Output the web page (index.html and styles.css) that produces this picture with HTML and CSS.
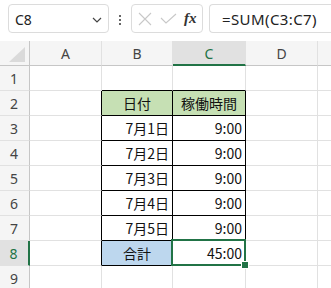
FILE: index.html
```html
<!DOCTYPE html>
<html lang="ja">
<head>
<meta charset="utf-8">
<link rel="stylesheet" href="styles.css">
</head>
<body>
<div class="toolbar">
  <div class="namebox">
    <span class="ref">C8</span>
    <svg class="chev" width="10" height="6" viewBox="0 0 10 6"><path d="M1 1 L5 5 L9 1" fill="none" stroke="#444" stroke-width="1.2"/></svg>
  </div>
  <div class="dots"><span></span><span></span><span></span></div>
  <div class="fnbox">
    <svg width="14" height="14" viewBox="0 0 14 14"><path d="M1 1 L13 13 M13 1 L1 13" stroke="#c8c8c8" stroke-width="1.1" fill="none"/></svg>
    <svg width="17" height="12" viewBox="0 0 17 12"><path d="M1 5 L6 10 L16 1" stroke="#c8c8c8" stroke-width="1.1" fill="none"/></svg>
    <span class="fx">fx</span>
  </div>
  <div class="formula">=SUM(C3:C7)</div>
</div>
<div class="grid">
  <div class="corner"><span class="tri"></span></div>
  <div class="ch">A</div><div class="ch">B</div><div class="ch sel">C</div><div class="ch">D</div><div class="ch last"></div>

  <div class="rh">1</div><div class="c"></div><div class="c bb"></div><div class="c bb"></div><div class="c"></div><div class="c last"></div>

  <div class="rh">2</div><div class="c br"></div><div class="c bb br hd ctr">日付</div><div class="c bb br hd ctr">稼働時間</div><div class="c"></div><div class="c last"></div>

  <div class="rh">3</div><div class="c br"></div><div class="c bb br num">7月1日</div><div class="c bb br num">9:00</div><div class="c"></div><div class="c last"></div>

  <div class="rh">4</div><div class="c br"></div><div class="c bb br num">7月2日</div><div class="c bb br num">9:00</div><div class="c"></div><div class="c last"></div>

  <div class="rh">5</div><div class="c br"></div><div class="c bb br num">7月3日</div><div class="c bb br num">9:00</div><div class="c"></div><div class="c last"></div>

  <div class="rh">6</div><div class="c br"></div><div class="c bb br num">7月4日</div><div class="c bb br num">9:00</div><div class="c"></div><div class="c last"></div>

  <div class="rh">7</div><div class="c br"></div><div class="c bb br num">7月5日</div><div class="c bb br num">9:00</div><div class="c"></div><div class="c last"></div>

  <div class="rh rsel">8</div><div class="c br"></div><div class="c bb br tot ctr">合計</div><div class="c bb br num active">45:00<span class="handle"></span></div><div class="c"></div><div class="c last"></div>

  <div class="rh">9</div><div class="c"></div><div class="c"></div><div class="c"></div><div class="c"></div><div class="c last"></div>
</div>
</body>
</html>
```
FILE: styles.css
```css
html, body {
  margin: 0;
  padding: 0;
  background: #ffffff;
  overflow: hidden;
  width: 331px;
  height: 288px;
}

.toolbar {
  height: 41px;
  width: 331px;
  overflow: hidden;
  display: flex;
  align-items: flex-start;
  padding-top: 4px;
  box-sizing: border-box;
  font-family: "Noto Sans", "Liberation Sans", sans-serif;
  color: #222;
}

.namebox {
  flex: 0 0 101px;
  margin-left: 8px;
  height: 29px;
  box-sizing: border-box;
  border: 1px solid #dcdcdc;
  border-radius: 4px;
  display: flex;
  align-items: center;
  justify-content: space-between;
  padding: 0 6px 0 6px;
  font-size: 14px;
}

.ref { padding-top: 2px; }

.chev { margin-top: 2px; }

.dots {
  flex: 0 0 22px;
  display: flex;
  flex-direction: column;
  align-items: center;
  gap: 2px;
  padding-top: 11px;
}

.dots span {
  width: 2px;
  height: 2px;
  background: #333;
  border-radius: 1px;
}

.fnbox {
  flex: 0 0 72px;
  height: 29px;
  box-sizing: border-box;
  border: 1px solid #dcdcdc;
  border-radius: 4px;
  display: flex;
  align-items: center;
  gap: 8px;
  padding-left: 6px;
}

.fx {
  font-family: "Liberation Serif", serif;
  font-style: italic;
  font-weight: bold;
  font-size: 15px;
  color: #333;
  margin-left: -1px;
}

.formula {
  margin-left: 6px;
  flex: 0 0 160px;
  height: 29px;
  box-sizing: border-box;
  border: 1px solid #dcdcdc;
  border-right: none;
  border-radius: 4px 0 0 4px;
  padding-left: 12px;
  display: flex;
  align-items: center;
  font-size: 15px;
  color: #222;
  letter-spacing: 0.4px;
}

.grid {
  display: grid;
  grid-template-columns: 30px 72px 71px 73px 72px 20px;
  grid-auto-rows: 25px;
  font-family: "Noto Sans CJK JP", "Noto Sans", sans-serif;
}

.grid > div {
  box-sizing: border-box;
  border-right: 1px solid #e1e1e1;
  border-bottom: 1px solid #e1e1e1;
}

.corner {
  background: #f5f5f5;
  position: relative;
  border-bottom: 1px solid #c6c6c6 !important;
  border-right: 1px solid #c6c6c6 !important;
}

.tri {
  position: absolute;
  right: 4px;
  bottom: 3px;
  width: 0;
  height: 0;
  border-left: 16px solid transparent;
  border-bottom: 15px solid #dadada;
}

.ch {
  background: #f5f5f5;
  border-bottom: 1px solid #c6c6c6 !important;
  display: flex;
  align-items: center;
  justify-content: center;
  font-family: "Noto Sans", "Liberation Sans", sans-serif;
  font-size: 14px;
  color: #444;
  padding-top: 1px;
}

.ch.sel {
  background: #e1e1e1;
  color: #217346;
  border-bottom: 2px solid #217346 !important;
}

.rh {
  background: #f5f5f5;
  border-right: 1px solid #c6c6c6 !important;
  display: flex;
  align-items: center;
  justify-content: center;
  font-family: "Noto Sans", "Liberation Sans", sans-serif;
  font-size: 14px;
  color: #444;
  padding-right: 1px;
}

.rh.rsel {
  background: #e1e1e1;
  color: #217346;
  border-right: 2px solid #217346 !important;
}

.c {
  font-size: 14px;
  color: #111;
  display: flex;
  align-items: center;
}

.grid > .bb { border-bottom: 1px solid #000; }
.grid > .br { border-right: 1px solid #000; }

.ctr { justify-content: center; }
.num { justify-content: flex-end; padding-right: 3px; }

.hd { background: #c6e0b4; }
.tot { background: #bdd7ee; }

.active { position: relative; }

.active::after {
  content: "";
  position: absolute;
  left: -2px;
  top: -2px;
  right: -1px;
  bottom: -1px;
  border: 2px solid #217346;
}

.handle {
  position: absolute;
  right: -4px;
  bottom: -4px;
  width: 6px;
  height: 6px;
  background: #217346;
  border: 1px solid #fff;
  z-index: 2;
}
```
